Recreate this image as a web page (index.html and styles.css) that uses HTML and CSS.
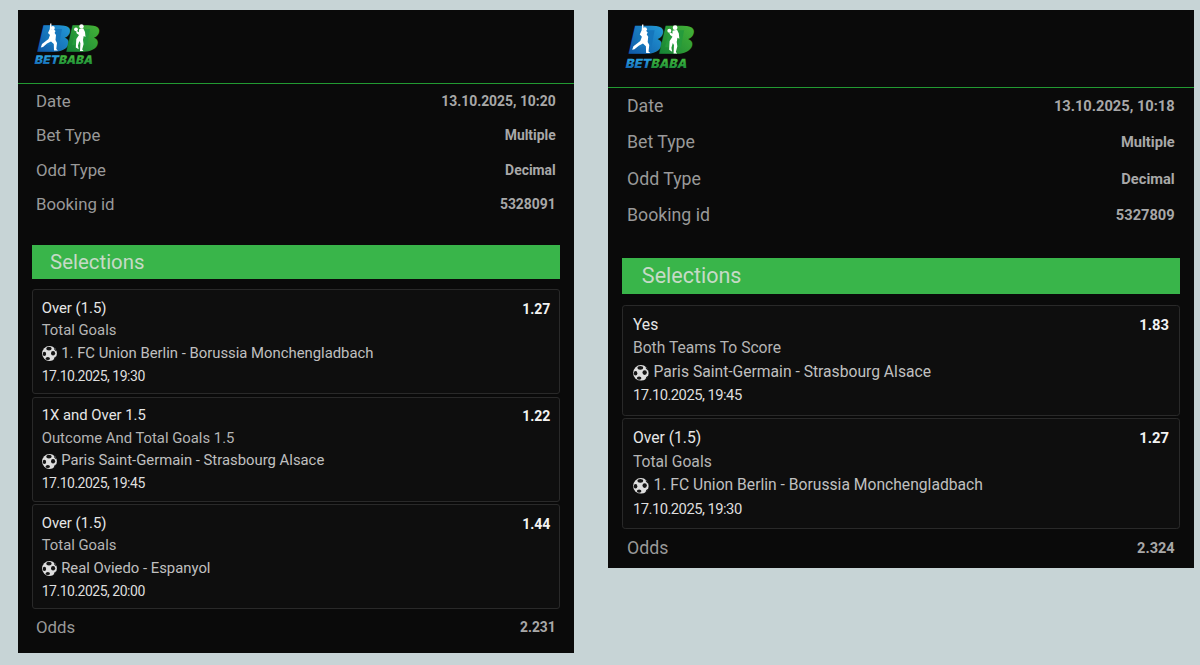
FILE: index.html
```html
<!DOCTYPE html>
<html lang="en">
<head>
<meta charset="utf-8">
<title>Betbaba bookings</title>
<link rel="stylesheet" href="styles.css">
</head>
<body>
<svg class="defs" width="0" height="0" aria-hidden="true">
  <defs>
    <linearGradient id="blue" x1="0" y1="1" x2="0.6" y2="0"><stop offset="0" stop-color="#0b4d9c"/><stop offset="1" stop-color="#239ad8"/></linearGradient>
    <linearGradient id="green" x1="0" y1="1" x2="0.6" y2="0"><stop offset="0" stop-color="#0c7a35"/><stop offset="1" stop-color="#45b338"/></linearGradient>
    <linearGradient id="word-blue" x1="0" y1="0" x2="0" y2="1"><stop offset=".3" stop-color="#2a9ddb"/><stop offset="1" stop-color="#0d5aa8"/></linearGradient>
    <linearGradient id="word-green" x1="0" y1="0" x2="0" y2="1"><stop offset=".3" stop-color="#3fb53e"/><stop offset="1" stop-color="#118038"/></linearGradient>
    <symbol id="logo" viewBox="0 0 68 44">
      <g transform="skewX(-13)" font-family="Inter, Roboto, sans-serif" font-weight="900">
        <text x="9" y="27.6" font-size="34.4" textLength="30.5" lengthAdjust="spacingAndGlyphs" fill="url(#blue)" stroke="url(#blue)" stroke-width="1.6">B</text>
        <text x="37.8" y="27.6" font-size="34.4" textLength="30.5" lengthAdjust="spacingAndGlyphs" fill="url(#green)" stroke="url(#green)" stroke-width="1.6">B</text>
        <text x="9.6" y="41.3" font-size="12" textLength="24" lengthAdjust="spacingAndGlyphs" fill="url(#word-blue)">BET</text>
        <text x="33.8" y="41.3" font-size="12" textLength="34" lengthAdjust="spacingAndGlyphs" fill="url(#word-green)">BABA</text>
      </g>
      <path fill="#1576bc" d="M14 6h14l-3 16H10z"/><path fill="#259b3c" d="M42 6h14l-3 16H38z"/>
      <g fill="#fff">
        <path d="M16.2 0.5 L17.4 .5 17.5 6.5 19.5 6 21.5 8 20.6 10 22 12 21.5 17 23 20 22.3 26 24 27.5 20 27.5 19.8 21 17 18.5 13 20.5 9 24 6.8 24.5 8 21 14.5 16 16 12 14 10 15.8 6z"/>
        <circle cx="18.8" cy="5" r="2"/>
        <circle cx="42" cy="6.3" r="1.9"/><circle cx="47.5" cy="3.5" r="2.2"/>
        <path d="M45 6.3 L49.3 5.5 51 9 51.5 14 49.7 13 49 17 49.6 21 48.2 26.5 49.5 28 46 28 46.4 20 45.3 18 44 22.5 44.7 26.3 41.8 24.5 42.3 16 45 12 42.8 10.5 42 8.5 43 8 45 9.3z"/>
      </g>
    </symbol>
    <symbol id="ball" viewBox="0 0 16 16">
      <circle cx="8" cy="8" r="7.9" fill="#dedede"/>
      <g fill="#151515"><ellipse cx="7.4" cy="2.8" rx="2.9" ry="1.9"/><ellipse cx="2.6" cy="8.4" rx="1.8" ry="2.3"/><ellipse cx="11.8" cy="7.6" rx="2.2" ry="2.4"/><ellipse cx="6.2" cy="13.2" rx="2.3" ry="1.6"/><path d="M13 1.8 16 5.5 14.6 5.4 12.9 3.4zM15.8 10.6 13.7 14.2 12.5 14.6 13.4 12.1z"/></g>
    </symbol>
  </defs>
</svg>
<main class="board">
  <section class="slip">
    <header class="head"><svg class="logo" role="img" aria-label="Betbaba"><use href="#logo"/></svg></header>
    <dl class="info">
      <div class="row"><dt>Date</dt><dd class="date">13.10.2025, 10:20</dd></div>
      <div class="row"><dt>Bet Type</dt><dd>Multiple</dd></div>
      <div class="row"><dt>Odd Type</dt><dd>Decimal</dd></div>
      <div class="row"><dt>Booking id</dt><dd>5328091</dd></div>
    </dl>
    <h2 class="title">Selections</h2>
    <div class="cards">
      <article class="card"><b class="odd">1.27</b><p class="pick">Over (1.5)</p><p>Total Goals</p><p class="match"><svg class="ball"><use href="#ball"/></svg><span>1. FC Union Berlin - Borussia Monchengladbach</span></p><p class="time">17.10.2025, 19:30</p></article>
      <article class="card"><b class="odd">1.22</b><p class="pick">1X and Over 1.5</p><p>Outcome And Total Goals 1.5</p><p class="match"><svg class="ball"><use href="#ball"/></svg><span>Paris Saint-Germain - Strasbourg Alsace</span></p><p class="time">17.10.2025, 19:45</p></article>
      <article class="card"><b class="odd">1.44</b><p class="pick">Over (1.5)</p><p>Total Goals</p><p class="match"><svg class="ball"><use href="#ball"/></svg><span>Real Oviedo - Espanyol</span></p><p class="time">17.10.2025, 20:00</p></article>
    </div>
    <dl class="total row"><dt>Odds</dt><dd>2.231</dd></dl>
  </section>
  <section class="slip large">
    <header class="head"><svg class="logo" role="img" aria-label="Betbaba"><use href="#logo"/></svg></header>
    <dl class="info">
      <div class="row"><dt>Date</dt><dd class="date">13.10.2025, 10:18</dd></div>
      <div class="row"><dt>Bet Type</dt><dd>Multiple</dd></div>
      <div class="row"><dt>Odd Type</dt><dd>Decimal</dd></div>
      <div class="row"><dt>Booking id</dt><dd>5327809</dd></div>
    </dl>
    <h2 class="title">Selections</h2>
    <div class="cards">
      <article class="card"><b class="odd">1.83</b><p class="pick">Yes</p><p>Both Teams To Score</p><p class="match"><svg class="ball"><use href="#ball"/></svg><span>Paris Saint-Germain - Strasbourg Alsace</span></p><p class="time">17.10.2025, 19:45</p></article>
      <article class="card"><b class="odd">1.27</b><p class="pick">Over (1.5)</p><p>Total Goals</p><p class="match"><svg class="ball"><use href="#ball"/></svg><span>1. FC Union Berlin - Borussia Monchengladbach</span></p><p class="time">17.10.2025, 19:30</p></article>
    </div>
    <dl class="total row"><dt>Odds</dt><dd>2.324</dd></dl>
  </section>
</main>
</body>
</html>
```
FILE: styles.css
```css
* { box-sizing: border-box; margin: 0; padding: 0; }
body { height: 665px; overflow: hidden; background: #c7d4d6; font-family: Roboto, "Liberation Sans", sans-serif; }
.defs { display: block; }
.board { display: flex; align-items: flex-start; gap: 34px; padding: 10px 6px 0 18px; }

.slip { --u: 1px; width: 556px; height: 643px; background: #0a0a0a; color: #b5b5b5; }
.slip.large { --u: 1.0555px; width: 586px; height: 557.5px; }

.head { height: calc(74 * var(--u)); padding: calc(13 * var(--u)) 0 0 calc(16 * var(--u)); border-bottom: 1px solid #229a32; }
.logo { display: block; width: calc(68 * var(--u)); height: calc(44 * var(--u)); }

.row { display: flex; justify-content: space-between; align-items: center; height: calc(34.3 * var(--u)); padding: 0 calc(18.3 * var(--u)) 0 calc(18 * var(--u)); }
.row dt { font-size: calc(16.8 * var(--u)); color: #999; }
.row dd { font-size: calc(13.9 * var(--u)); font-weight: 700; color: #a8a8a8; }

.title { height: calc(34.3 * var(--u)); margin: calc(24 * var(--u)) calc(13.6 * var(--u)) 0; padding-left: calc(18.5 * var(--u)); background: #39b54a; color: #c6dac6; font-size: calc(20.4 * var(--u)); font-weight: 400; line-height: calc(34.6 * var(--u)); }

.cards { display: grid; gap: calc(2.4 * var(--u)); padding: calc(9.7 * var(--u)) calc(13.6 * var(--u)) 0; }
.card { height: calc(105.1 * var(--u)); padding: calc(6.8 * var(--u)) calc(9.1 * var(--u)) 0; border: 1px solid #292929; border-radius: calc(3 * var(--u)); background: #0e0e0e; font-size: calc(14.85 * var(--u)); line-height: calc(22.3 * var(--u)); }
.odd { float: right; margin-top: calc(1 * var(--u)); color: #f3f3f3; font-size: calc(14 * var(--u)); font-weight: 700; }
.pick { color: #e6e6e6; }
.match { display: flex; align-items: center; gap: calc(4.5 * var(--u)); color: #c0c0c0; }
.ball { width: calc(15 * var(--u)); height: calc(15 * var(--u)); margin-top: calc(2 * var(--u)); }
.time { margin-top: calc(0.8 * var(--u)); color: #dedede; font-size: calc(14 * var(--u)); letter-spacing: calc(-0.49 * var(--u)); }
.total { padding-top: calc(0.8 * var(--u)); }
.total dd { font-size: calc(13.8 * var(--u)); }
```
